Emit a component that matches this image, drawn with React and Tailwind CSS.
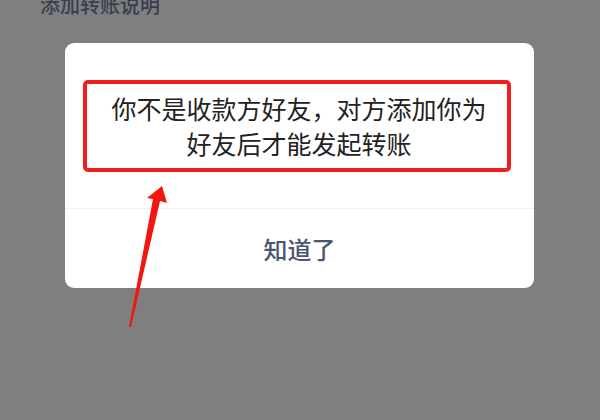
import React from 'react'

export default function App() {
  return (
    <div className="relative w-[600px] h-[420px] overflow-hidden bg-[#7f7f7f]" style={{ fontFamily: '"Noto Sans CJK SC", "Noto Sans", sans-serif' }}>
      <div className="pl-[40px] -mt-[5px] h-[20px] text-[20px] leading-[20px] font-medium text-[#363e50]">添加转账说明</div>

      <div className="mt-[28px] ml-[65px] w-[469px] h-[245px] bg-white rounded-[9px] flex flex-col">
        <div className="mt-[37px] ml-[18px] mr-[23px] h-[92px] border-[4px] border-[#f21d1d] rounded-[5px] flex flex-col items-center justify-center text-[25px] leading-[35px] text-[#222222] pl-[4px]">
          <div>你不是收款方好友，对方添加你为</div>
          <div>好友后才能发起转账</div>
        </div>
        <div className="mt-[36px] h-px bg-[#f0f0f0]" />
        <div className="flex-1 flex items-center justify-center text-[24px] font-medium text-[#4a5571]">知道了</div>
      </div>

      <svg className="absolute left-0 top-0" width="600" height="420" viewBox="0 0 600 420">
        <polygon points="162,186 167,203 160,201 131,327 129,327 153,199 147,198" fill="#f3160f" />
      </svg>
    </div>
  )
}
